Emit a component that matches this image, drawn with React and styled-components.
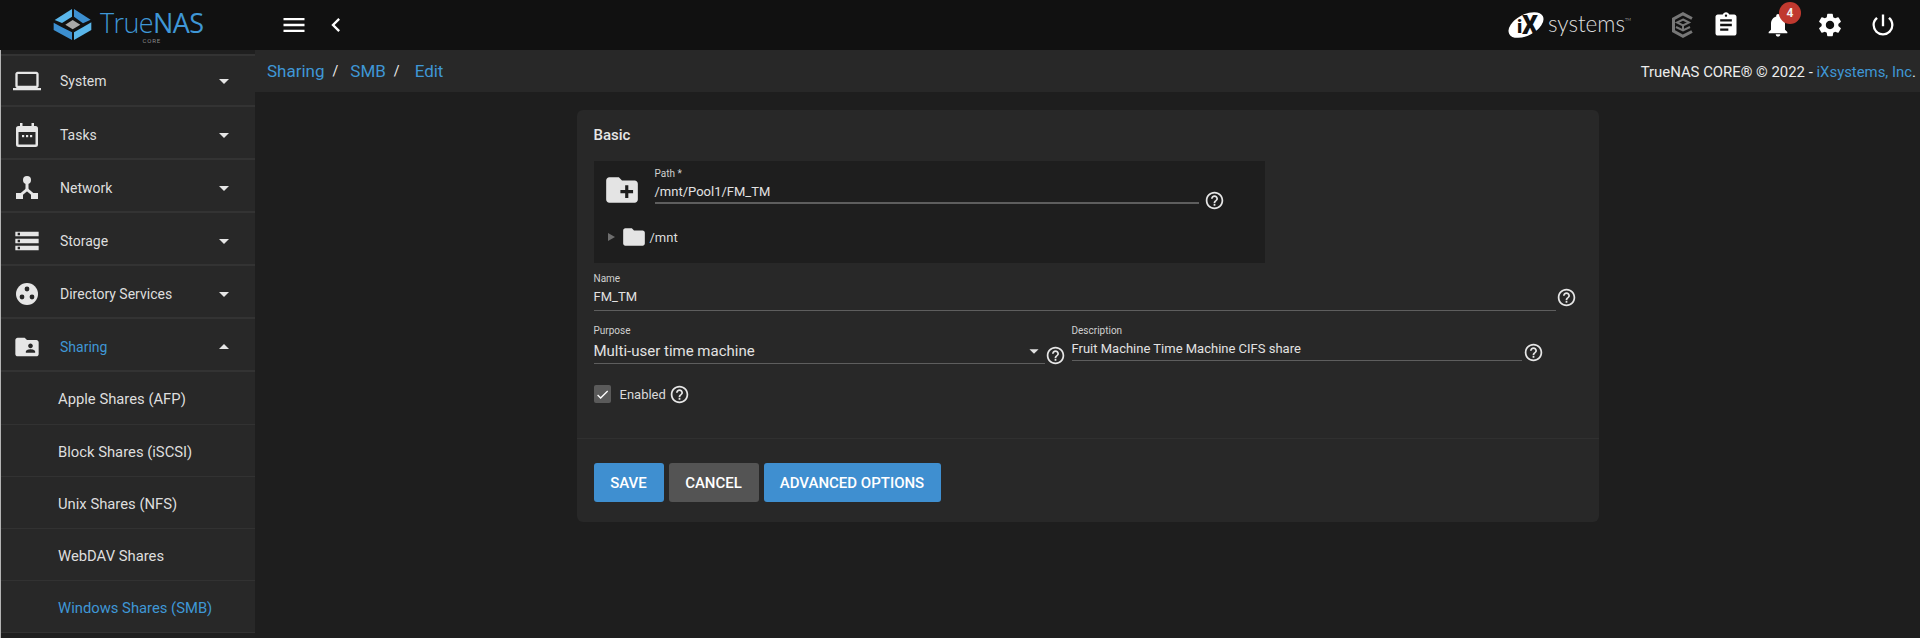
import React from 'react';
import styled, { createGlobalStyle } from 'styled-components';
import {
  MdLaptop,
  MdStorage,
  MdFolderShared,
  MdArrowDropDown,
  MdArrowDropUp,
  MdMenu,
  MdChevronLeft,
  MdAssignment,
  MdNotifications,
  MdSettings,
  MdPowerSettingsNew,
  MdHelpOutline,
  MdCreateNewFolder,
  MdFolder,
  MdCheck,
} from 'react-icons/md';

const GlobalStyle = createGlobalStyle`
  html, body {
    margin: 0;
    padding: 0;
    background: #1e1e1e;
    overflow: hidden;
  }
  * {
    box-sizing: border-box;
  }
`;

const Page = styled.div`
  width: 1920px;
  height: 638px;
  overflow: hidden;
  display: flex;
  flex-direction: column;
  font-family: Roboto, 'Liberation Sans', sans-serif;
  color: #e4e4e4;
  background: #1e1e1e;
`;

/* top bar */
const TopBar = styled.header`
  height: 50px;
  flex: none;
  display: flex;
  align-items: center;
  background: #111111;
`;
const Brand = styled.div`
  width: 256px;
  height: 50px;
  flex: none;
  display: flex;
  padding: 9px 0 0 53px;
  gap: 8px;
`;
const BrandText = styled.div`
  display: flex;
  flex-direction: column;
  align-items: center;
`;
const BrandName = styled.div`
  font-family: 'Open Sans', sans-serif;
  font-size: 27px;
  line-height: 28px;
  font-weight: 300;
  color: #3f97d6;
  letter-spacing: -0.6px;
  b {
    font-weight: 500;
  }
`;
const BrandSub = styled.div`
  font-size: 6px;
  line-height: 7px;
  letter-spacing: 0.8px;
  color: #8a8a8a;
`;
const NavButton = styled.div`
  display: flex;
  align-items: center;
  color: #ffffff;
  margin-left: ${(p) => p.$gap}px;
`;
const TopRight = styled.div`
  margin-left: auto;
  display: flex;
  align-items: center;
  height: 50px;
  padding-right: 23px;
`;
const VendorLogo = styled.div`
  display: flex;
  flex: none;
  align-items: center;
  margin-right: 38px;
`;
const VendorName = styled.span`
  font-family: Lato, sans-serif;
  font-weight: 300;
  font-size: 22.5px;
  line-height: 28px;
  margin: -3px 0 0 4px;
  color: #dddddd;
  white-space: nowrap;
  sup {
    font-size: 4px;
    vertical-align: 11px;
    line-height: 0;
  }
`;
const TopIcon = styled.div`
  position: relative;
  display: flex;
  justify-content: center;
  width: 28px;
  color: #ffffff;
  margin-left: ${(p) => p.$gap || 0}px;
`;
const Badge = styled.span`
  position: absolute;
  top: -9px;
  left: 15px;
  width: 22px;
  height: 22px;
  border-radius: 50%;
  background: #c0392f;
  color: #f2f2f2;
  font-size: 12px;
  font-weight: 700;
  line-height: 22px;
  text-align: center;
`;

/* body */
const Body = styled.div`
  flex: 1;
  display: flex;
  min-height: 0;
  border-left: 1px solid #b4b4b4;
`;
const Sidebar = styled.nav`
  width: 254px;
  flex: none;
  padding-top: 4px;
  background: #1f1f1f;
  overflow: hidden;
`;
const NavRow = styled.div`
  height: 53px;
  display: flex;
  align-items: center;
  padding: 4px 19px 0 12px;
  background: #282828;
  border-top: ${(p) => (p.$first ? '2px solid #333333' : 'none')};
  border-bottom: 2px solid #333333;
  font-size: 14px;
  color: ${(p) => (p.$active ? '#3f97d6' : '#dedede')};
  ${(p) => p.$first && 'padding-top: 1px;'}
`;
const NavIcon = styled.div`
  width: 47px;
  flex: none;
  display: flex;
  color: #e6e6e6;
`;
const NavLabel = styled.span`
  flex: 1;
`;
const Caret = styled.div`
  display: flex;
  color: #e6e6e6;
`;
const SubRow = styled.div`
  height: ${(p) => p.$h}px;
  display: flex;
  align-items: center;
  padding: 2px 0 0 57px;
  background: #282828;
  border-bottom: 1px solid #323232;
  font-size: 14.8px;
  color: ${(p) => (p.$active ? '#3f97d6' : '#dedede')};
`;

/* main */
const Main = styled.main`
  flex: 1;
  min-width: 0;
  display: flex;
  flex-direction: column;
`;
const CrumbBar = styled.div`
  height: 42px;
  flex: none;
  display: flex;
  align-items: center;
  justify-content: space-between;
  padding: 0 4px 0 12px;
  background: #282828;
`;
const Crumbs = styled.div`
  display: flex;
  align-items: center;
  font-size: 17px;
`;
const Crumb = styled.span`
  color: #3f97d6;
`;
const Slash = styled.span`
  color: #eeeeee;
  font-size: 14px;
  margin: 0 ${(p) => p.$right}px 0 8px;
`;
const Copy = styled.div`
  font-size: 14.9px;
  color: #ededed;
  margin-top: 2px;
  a {
    color: #3f97d6;
  }
`;
const Card = styled.section`
  width: 1022px;
  height: 412px;
  margin: 18px auto 0;
  flex: none;
  background: #282828;
  border-radius: 6px;
`;
const CardBody = styled.div`
  height: 329px;
  padding: 16px 17px 0;
  border-bottom: 1px solid #303030;
`;
const CardTitle = styled.h3`
  margin: 0 0 17px;
  font-size: 15px;
  line-height: 18px;
  font-weight: 500;
  color: #e6e6e6;
`;
const Explorer = styled.div`
  width: 671px;
  height: 102px;
  background: #1e1e1e;
  padding: 7px 0 0 13px;
`;
const ExplorerTop = styled.div`
  display: flex;
`;
const FolderAdd = styled.div`
  display: flex;
  margin: 3px 14px 0 -4px;
  color: #e4e4e4;
`;
const Tree = styled.div`
  display: flex;
  align-items: center;
  font-size: 13px;
  margin-top: 13px;
  color: #dddddd;
`;
const TreeArrow = styled.span`
  width: 0;
  height: 0;
  border-left: 7px solid #6e6e6e;
  border-top: 4.5px solid transparent;
  border-bottom: 4.5px solid transparent;
  margin: 0 9px 0 1px;
`;
const TreeFolder = styled.div`
  display: flex;
  margin: 0 3px 0 -3px;
  color: #e4e4e4;
`;
const FormRow = styled.div`
  display: flex;
  align-items: flex-start;
  margin-top: ${(p) => p.$top}px;
`;
const Field = styled.div`
  width: ${(p) => p.$w}px;
  flex: none;
  margin-left: ${(p) => p.$left || 0}px;
`;
const FieldLabel = styled.div`
  font-size: 10px;
  line-height: 12px;
  color: #d0d0d0;
`;
const FieldValue = styled.div`
  display: flex;
  align-items: center;
  justify-content: space-between;
  height: ${(p) => p.$h}px;
  padding-top: ${(p) => p.$pad || 0}px;
  padding-bottom: ${(p) => p.$padb || 0}px;
  font-size: ${(p) => p.$size}px;
  color: #e2e2e2;
  border-bottom: ${(p) => p.$line || 1}px solid #5e5e5e;
`;
const Help = styled.div`
  display: flex;
  margin: ${(p) => p.$top}px 0 0 ${(p) => p.$left}px;
  color: #e6e6e6;
`;
const CheckRow = styled.div`
  display: flex;
  align-items: center;
  margin-top: 17px;
  font-size: 13px;
  color: #dadada;
`;
const CheckBox = styled.div`
  width: 17px;
  height: 18px;
  display: flex;
  align-items: center;
  justify-content: center;
  background: #5a5a5a;
  border-radius: 2px;
  color: #ffffff;
  margin-right: 9px;
`;
const Actions = styled.div`
  display: flex;
  gap: 5px;
  padding: 24px 17px 0;
`;
const Button = styled.button`
  height: 39px;
  width: ${(p) => p.$w}px;
  padding: 0;
  border: 0;
  border-radius: 3px;
  background: ${(p) => (p.$muted ? '#545454' : '#3f8fd0')};
  color: #ffffff;
  font-family: inherit;
  font-size: 15px;
  font-weight: 500;
`;

const TrueLogo = () => (
  <svg width="39" height="31" viewBox="25 15 113 93">
    <polygon points="28,48 80,15 80,38 50,57" fill="#5ab6ea" />
    <polygon points="86,15 136,47 113,58 86,38" fill="#3c8fd0" />
    <polygon points="25,56 47,68 80,85 80,108 25,78" fill="#3c8fd0" />
    <polygon points="86,85 115,68 138,55 138,78 86,108" fill="#5ab6ea" />
    <polygon points="82,48 105,62 82,76 60,62" fill="#a8a8a8" />
  </svg>
);

const IxMark = () => (
  <svg width="36" height="28" viewBox="0 0 36 28">
    <ellipse cx="18" cy="14" rx="19" ry="10.500" transform="rotate(-28 18 14)" fill="#ffffff" />
    <text x="9" y="22" fontFamily="Roboto" fontWeight="900" fontSize="19" fill="#111111">i</text>
    <text x="14" y="23" fontFamily="Roboto" fontWeight="900" fontSize="25" fill="#111111">X</text>
  </svg>
);

const CubeMark = () => (
  <svg width="26" height="26" viewBox="0 0 26 26" fill="none" stroke="#777777" strokeWidth="3">
    <path d="M22 6.500 13 1.800 3.500 7v12l9.500 5.200 9-4.700" />
    <path d="M13 7.500l6 3-6 3-6-3z" strokeWidth="2" />
    <path d="M6 15l7 3.500 7-3.500M13 13v5" strokeWidth="2" />
  </svg>
);

const CalendarIcon = () => (
  <svg width="28" height="28" viewBox="0 0 28 28" fill="currentColor">
    <path d="M7 2h2.500v3h9V2H21v3h1.500A2.500 2.500 0 0 1 25 7.500v16a2.500 2.500 0 0 1-2.500 2.500h-17A2.500 2.500 0 0 1 3 23.500v-16A2.500 2.500 0 0 1 5.500 5H7zM5.500 11v12.500h17V11z" />
    <rect x="9" y="14" width="2.200" height="2.200" />
    <rect x="13" y="14" width="2.200" height="2.200" />
    <rect x="17" y="14" width="2.200" height="2.200" />
  </svg>
);

const NetworkIcon = () => (
  <svg width="28" height="28" viewBox="0 0 28 28" fill="currentColor">
    <circle cx="14" cy="6" r="4" />
    <rect x="12.500" y="8" width="3" height="8" />
    <path d="M13 14.500 6.500 20l2 2 6.500-5.500z" />
    <path d="M15 14.500l6.500 5.500-2 2L13 16.500z" />
    <rect x="3" y="19" width="7" height="6" />
    <rect x="18" y="19" width="7" height="6" />
  </svg>
);

const DirectoryIcon = () => (
  <svg width="28" height="28" viewBox="0 0 28 28">
    <circle cx="14" cy="14" r="11" fill="currentColor" />
    <circle cx="14" cy="9" r="2.400" fill="#282828" />
    <circle cx="9" cy="17" r="2.400" fill="#282828" />
    <circle cx="19" cy="17" r="2.400" fill="#282828" />
  </svg>
);

const menu = [
  { label: 'System', icon: <MdLaptop size={28} /> },
  { label: 'Tasks', icon: <CalendarIcon /> },
  { label: 'Network', icon: <NetworkIcon /> },
  { label: 'Storage', icon: <MdStorage size={28} /> },
  { label: 'Directory Services', icon: <DirectoryIcon /> },
];

const shares = [
  { label: 'Apple Shares (AFP)', h: 53 },
  { label: 'Block Shares (iSCSI)', h: 52 },
  { label: 'Unix Shares (NFS)', h: 52 },
  { label: 'WebDAV Shares', h: 52 },
  { label: 'Windows Shares (SMB)', h: 52, active: true },
];

export default function App() {
  return (
    <Page>
      <GlobalStyle />
      <TopBar>
        <Brand>
          <TrueLogo />
          <BrandText>
            <BrandName>
              True<b>NAS</b>
            </BrandName>
            <BrandSub>CORE</BrandSub>
          </BrandText>
        </Brand>
        <NavButton $gap={24}>
          <MdMenu size={28} />
        </NavButton>
        <NavButton $gap={14}>
          <MdChevronLeft size={28} />
        </NavButton>
        <TopRight>
          <VendorLogo>
            <IxMark />
            <VendorName>
              systems<sup>TM</sup>
            </VendorName>
          </VendorLogo>
          <TopIcon>
            <CubeMark />
          </TopIcon>
          <TopIcon $gap={15}>
            <MdAssignment size={28} />
          </TopIcon>
          <TopIcon $gap={24}>
            <MdNotifications size={28} />
            <Badge>4</Badge>
          </TopIcon>
          <TopIcon $gap={24}>
            <MdSettings size={28} />
          </TopIcon>
          <TopIcon $gap={25}>
            <MdPowerSettingsNew size={28} />
          </TopIcon>
        </TopRight>
      </TopBar>
      <Body>
        <Sidebar>
          {menu.map((item, i) => (
            <NavRow key={item.label} $first={i === 0}>
              <NavIcon>{item.icon}</NavIcon>
              <NavLabel>{item.label}</NavLabel>
              <Caret>
                <MdArrowDropDown size={24} />
              </Caret>
            </NavRow>
          ))}
          <NavRow $active>
            <NavIcon>
              <MdFolderShared size={28} />
            </NavIcon>
            <NavLabel>Sharing</NavLabel>
            <Caret>
              <MdArrowDropUp size={24} />
            </Caret>
          </NavRow>
          {shares.map((s) => (
            <SubRow key={s.label} $h={s.h} $active={s.active}>
              {s.label}
            </SubRow>
          ))}
        </Sidebar>
        <Main>
          <CrumbBar>
            <Crumbs>
              <Crumb>Sharing</Crumb>
              <Slash $right={12}>/</Slash>
              <Crumb>SMB</Crumb>
              <Slash $right={15}>/</Slash>
              <Crumb>Edit</Crumb>
            </Crumbs>
            <Copy>
              TrueNAS CORE® © 2022 - <a>iXsystems, Inc</a>.
            </Copy>
          </CrumbBar>
          <Card>
            <CardBody>
              <CardTitle>Basic</CardTitle>
              <Explorer>
                <ExplorerTop>
                  <FolderAdd>
                    <MdCreateNewFolder size={38} />
                  </FolderAdd>
                  <Field $w={544}>
                    <FieldLabel>Path *</FieldLabel>
                    <FieldValue $h={24} $size={13} $line={2}>
                      /mnt/Pool1/FM_TM
                    </FieldValue>
                  </Field>
                  <Help $top={22} $left={5}>
                    <MdHelpOutline size={21} />
                  </Help>
                </ExplorerTop>
                <Tree>
                  <TreeArrow />
                  <TreeFolder>
                    <MdFolder size={26} />
                  </TreeFolder>
                  /mnt
                </Tree>
              </Explorer>
              <FormRow $top={10}>
                <Field $w={962}>
                  <FieldLabel>Name</FieldLabel>
                  <FieldValue $h={26} $size={13} $padb={3}>
                    FM_TM
                  </FieldValue>
                </Field>
                <Help $top={14} $left={0}>
                  <MdHelpOutline size={21} />
                </Help>
              </FormRow>
              <FormRow $top={14}>
                <Field $w={451}>
                  <FieldLabel>Purpose</FieldLabel>
                  <FieldValue $h={27} $size={15} $pad={1}>
                    Multi-user time machine
                    <MdArrowDropDown size={22} />
                  </FieldValue>
                </Field>
                <Help $top={20} $left={0}>
                  <MdHelpOutline size={21} />
                </Help>
                <Field $w={450} $left={6}>
                  <FieldLabel>Description</FieldLabel>
                  <FieldValue $h={24} $size={13}>
                    Fruit Machine Time Machine CIFS share
                  </FieldValue>
                </Field>
                <Help $top={17} $left={1}>
                  <MdHelpOutline size={21} />
                </Help>
              </FormRow>
              <CheckRow>
                <CheckBox>
                  <MdCheck size={15} />
                </CheckBox>
                Enabled
                <Help $top={1} $left={3}>
                  <MdHelpOutline size={21} />
                </Help>
              </CheckRow>
            </CardBody>
            <Actions>
              <Button $w={70}>SAVE</Button>
              <Button $w={90} $muted>
                CANCEL
              </Button>
              <Button $w={177}>ADVANCED OPTIONS</Button>
            </Actions>
          </Card>
        </Main>
      </Body>
    </Page>
  );
}
